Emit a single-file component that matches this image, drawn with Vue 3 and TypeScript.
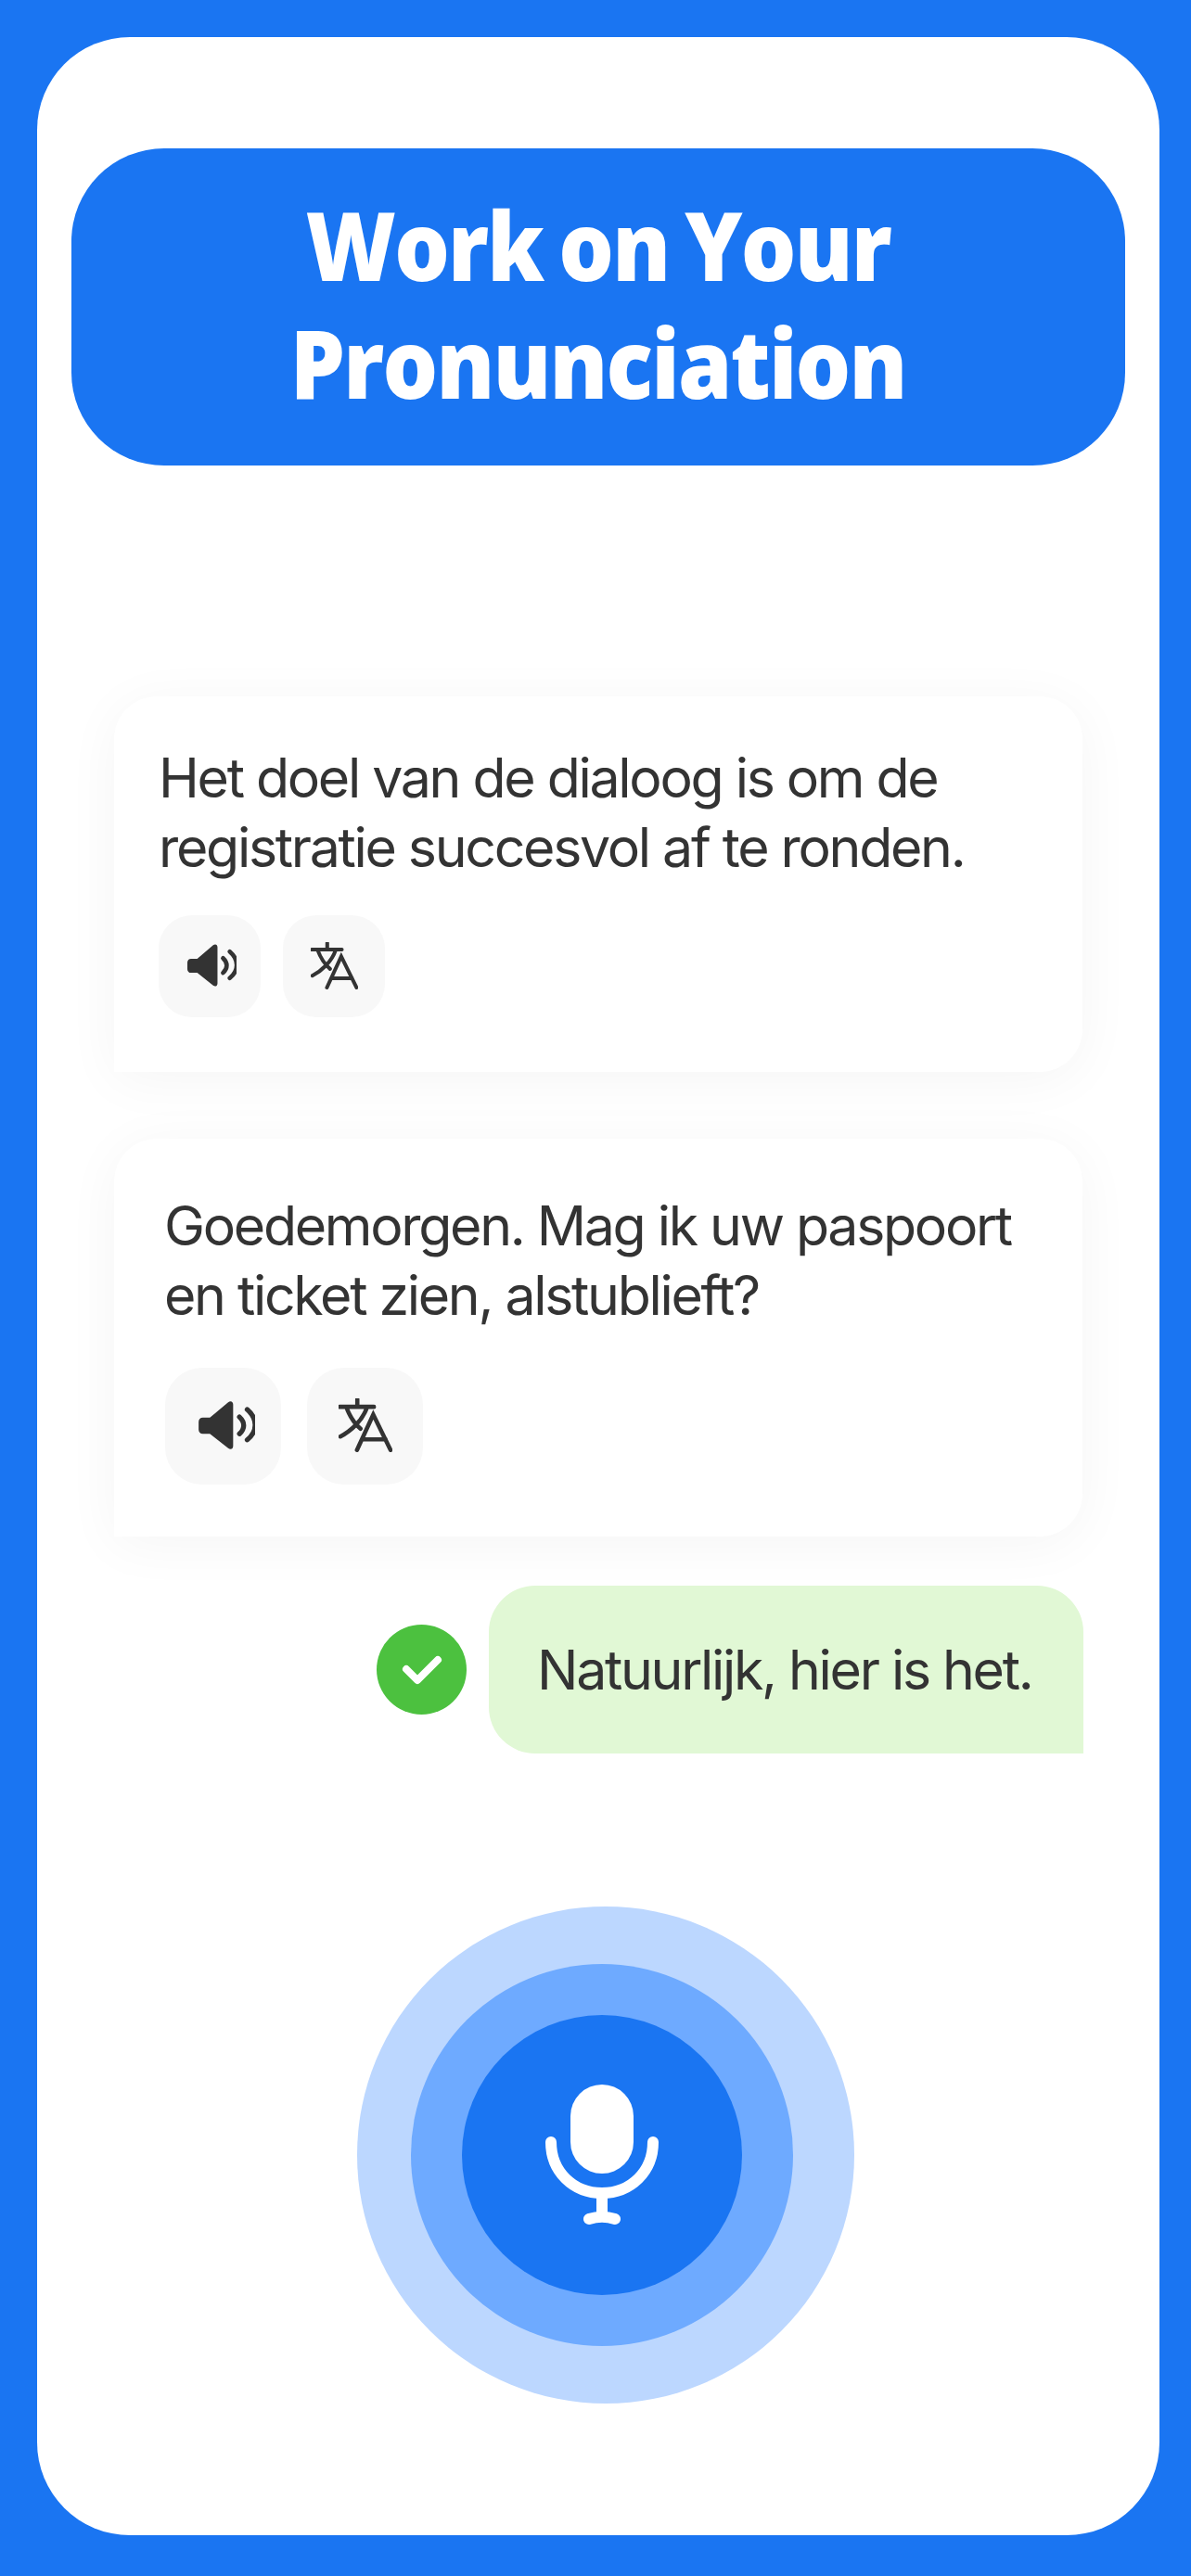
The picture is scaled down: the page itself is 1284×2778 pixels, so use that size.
<script setup lang="ts">
interface Card {
  id: string;
  size: 'small' | 'large';
  lines: string[];
}

const cards: Card[] = [
  { id: 'goal', size: 'small', lines: ['Het doel van de dialoog is om de', 'registratie succesvol af te ronden.'] },
  { id: 'greeting', size: 'large', lines: ['Goedemorgen. Mag ik uw paspoort', 'en ticket zien, alstublieft?'] },
];
</script>

<template>
  <div class="page">
    <main class="panel">
      <header class="banner">
        <h1>Work on Your<br />Pronunciation</h1>
      </header>

      <section class="chat">
        <article v-for="card in cards" :key="card.id" class="card" :class="card.size">
          <p class="text">
            <span v-for="line in card.lines" :key="line" class="line">{{ line }}</span>
          </p>
          <div class="actions">
            <button class="action" type="button" aria-label="Play">
              <svg class="speaker" viewBox="0 0 160 137">
                <path d="M12 47H32L84 3C91-2 98 1 98 10V127C98 136 91 139 84 134L32 93H12C5 93 0 88 0 81V59C0 52 5 47 12 47Z" fill="#333" />
                <path d="M116 45C132 60 132 78 116 93" fill="none" stroke="#333" stroke-width="14" stroke-linecap="round" />
                <path d="M138 24C168 50 168 86 138 110" fill="none" stroke="#333" stroke-width="14" stroke-linecap="round" />
              </svg>
            </button>
            <button class="action" type="button" aria-label="Translate">
              <svg class="translate" viewBox="0 0 152 152">
                <path d="M3 24H100M53 3V24M22 25C32 52 48 74 62 86M80 26C68 62 36 92 5 108" fill="none" stroke="#333" stroke-width="12" stroke-linecap="round" />
                <path d="M52 146L98 46L147 146M66 116H133" fill="none" stroke="#333" stroke-width="12" stroke-linecap="round" />
              </svg>
            </button>
          </div>
        </article>

        <div class="reply">
          <span class="check">
            <svg viewBox="0 0 44 32" width="44" height="32">
              <path d="M5 15L17 27L39 5" fill="none" stroke="#fff" stroke-width="8" stroke-linecap="round" stroke-linejoin="round" />
            </svg>
          </span>
          <div class="bubble">Natuurlijk, hier is het.</div>
        </div>
      </section>

      <div class="mic-wrap">
        <div class="ring outer">
          <div class="ring middle">
            <button class="ring inner" type="button" aria-label="Record">
              <svg viewBox="0 0 122 152" width="122" height="152">
                <rect x="27" y="0" width="68" height="96" rx="34" fill="#fff" />
                <path d="M6 62C6 94 30 117 61 117C92 117 116 94 116 62" fill="none" stroke="#fff" stroke-width="12" stroke-linecap="round" />
                <path d="M61 117V143" fill="none" stroke="#fff" stroke-width="12" />
                <path d="M47 145C56 142 66 142 75 145" fill="none" stroke="#fff" stroke-width="12" stroke-linecap="round" />
              </svg>
            </button>
          </div>
        </div>
      </div>
    </main>
  </div>
</template>

<style>
html,
body {
  margin: 0;
  padding: 0;
  background: #1a75f2;
}
</style>

<style scoped>
.page {
  box-sizing: border-box;
  width: 1284px;
  height: 2778px;
  padding: 40px 34px 44px 40px;
  background: #1a75f2;
  font-family: Inter, 'Liberation Sans', sans-serif;
  overflow: hidden;
}

.panel {
  box-sizing: border-box;
  display: flex;
  flex-direction: column;
  height: 100%;
  padding-top: 120px;
  background: #fff;
  border-radius: 100px;
}

.banner {
  box-sizing: border-box;
  height: 342px;
  margin: 0 37px;
  display: flex;
  align-items: center;
  justify-content: center;
  background: #1a75f2;
  border-radius: 100px;
}

.banner h1 {
  margin: 0;
  font-family: 'Open Sans', sans-serif;
  font-size: 102px;
  font-weight: 800;
  line-height: 127px;
  color: #fff;
  text-align: center;
  white-space: nowrap;
  letter-spacing: -2px;
  word-spacing: -6px;
  transform: translateY(-4px) scaleX(0.92);
}

.chat {
  display: flex;
  flex-direction: column;
  margin: 249px 83px 0;
}

.card {
  box-sizing: border-box;
  background: #fff;
  border-radius: 46px 46px 46px 0;
  box-shadow: 0 8px 60px rgba(0, 0, 0, 0.045);
}

.card.small {
  height: 405px;
  padding: 50px 48px 0;
}

.card.large {
  height: 429px;
  margin-top: 72px;
  padding: 56px 54px 0;
}

.text {
  margin: 0;
  font-size: 59px;
  font-weight: 400;
  line-height: 75px;
  color: #333;
  letter-spacing: -2.3px;
}

.line {
  display: block;
  white-space: nowrap;
}

.actions {
  display: flex;
}

.small .actions {
  margin-top: 36px;
  gap: 24px;
}

.large .actions {
  margin: 41px 0 0 1px;
  gap: 28px;
}

.action {
  display: flex;
  align-items: center;
  justify-content: center;
  padding: 0;
  border: 0;
  background: #f8f8f8;
}

.small .action {
  width: 110px;
  height: 110px;
  border-radius: 36px;
}

.large .action {
  width: 125px;
  height: 126px;
  border-radius: 40px;
}

.small .speaker {
  width: 53px;
  height: 46px;
  margin: -2px 0 0 5px;
}

.small .translate {
  width: 51px;
  height: 51px;
  margin-top: -2px;
}

.large .speaker {
  width: 61px;
  height: 52px;
  margin: -2px 0 0 8px;
}

.large .translate {
  width: 58px;
  height: 58px;
  margin-top: -2px;
}

.reply {
  display: flex;
  align-items: center;
  justify-content: flex-end;
  gap: 24px;
  margin: 53px -1px 0 0;
}

.check {
  width: 97px;
  height: 97px;
  display: flex;
  align-items: center;
  justify-content: center;
  border-radius: 50%;
  background: #4cc13f;
}

.bubble {
  box-sizing: border-box;
  width: 641px;
  height: 181px;
  padding-left: 52px;
  display: flex;
  align-items: center;
  background: #e1f8d5;
  border-radius: 50px 50px 0 50px;
  font-size: 59px;
  line-height: 75px;
  color: #333;
  letter-spacing: -2.3px;
  white-space: nowrap;
}

.mic-wrap {
  display: flex;
  margin: 165px 0 0 345px;
}

.ring {
  display: flex;
  align-items: center;
  justify-content: center;
  border-radius: 50%;
}

.outer {
  box-sizing: border-box;
  width: 536px;
  height: 536px;
  padding-right: 8px;
  background: #bcd7ff;
}

.middle {
  width: 412px;
  height: 412px;
  background: #6eaaff;
}

.inner {
  width: 302px;
  height: 302px;
  padding: 0;
  border: 0;
  background: #1a75f2;
}
</style>
